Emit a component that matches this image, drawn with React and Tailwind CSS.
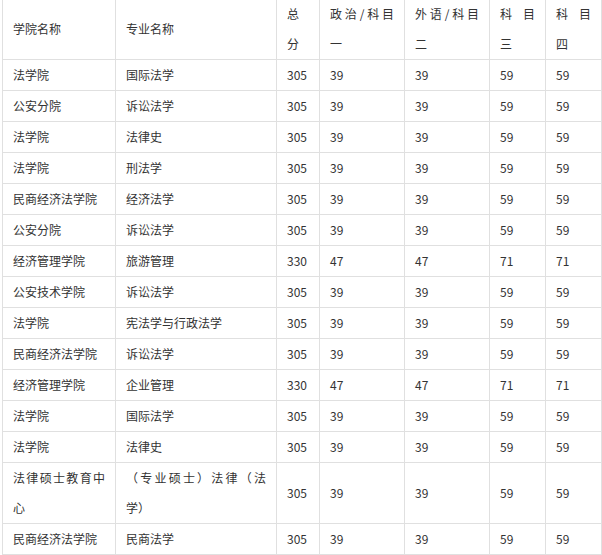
import React from "react";

const rows = [
  ["法学院", "国际法学", "305", "39", "39", "59", "59"],
  ["公安分院", "诉讼法学", "305", "39", "39", "59", "59"],
  ["法学院", "法律史", "305", "39", "39", "59", "59"],
  ["法学院", "刑法学", "305", "39", "39", "59", "59"],
  ["民商经济法学院", "经济法学", "305", "39", "39", "59", "59"],
  ["公安分院", "诉讼法学", "305", "39", "39", "59", "59"],
  ["经济管理学院", "旅游管理", "330", "47", "47", "71", "71"],
  ["公安技术学院", "诉讼法学", "305", "39", "39", "59", "59"],
  ["法学院", "宪法学与行政法学", "305", "39", "39", "59", "59"],
  ["民商经济法学院", "诉讼法学", "305", "39", "39", "59", "59"],
  ["经济管理学院", "企业管理", "330", "47", "47", "71", "71"],
  ["法学院", "国际法学", "305", "39", "39", "59", "59"],
  ["法学院", "法律史", "305", "39", "39", "59", "59"],
  ["法律硕士教育中心", "（专业硕士）法律（法学）", "305", "39", "39", "59", "59"],
  ["民商经济法学院", "民商法学", "305", "39", "39", "59", "59"],
];

const headers = ["学院名称", "专业名称", "总分", "政治/科目一", "外语/科目二", "科目三", "科目四"];

const cell =
  "border border-[#e0e0e0] px-[10px] py-0 align-middle text-justify leading-[30px] [text-spacing-trim:space-all]";

export default function App() {
  return (
    <div className="bg-white w-[602px] h-[555px] overflow-hidden">
      <table
        className="ml-[2px] mt-[-2px] border-collapse table-fixed w-[599px] text-[12px] text-[#333] [text-spacing-trim:space-all]"
        style={{ fontFamily: '"Noto Sans CJK SC", "Noto Sans", sans-serif' }}
      >
        <colgroup>
          <col className="w-[113px]" />
          <col className="w-[161px]" />
          <col className="w-[43px]" />
          <col className="w-[85px]" />
          <col className="w-[85px]" />
          <col className="w-[56px]" />
          <col className="w-[56px]" />
        </colgroup>
        <tbody>
          <tr>
            {headers.map((h, i) => (
              <td key={i} className={cell}>
                {h}
              </td>
            ))}
          </tr>
          {rows.map((r, i) => (
            <tr key={i}>
              {r.map((c, j) => (
                <td key={j} className={cell}>
                  {c}
                </td>
              ))}
            </tr>
          ))}
        </tbody>
      </table>
    </div>
  );
}
